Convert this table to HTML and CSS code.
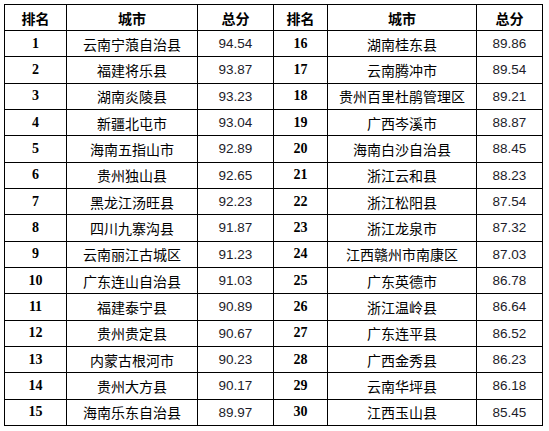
FILE: index.html
```html
<!DOCTYPE html>
<html lang="zh">
<head>
<meta charset="utf-8">
<link rel="stylesheet" href="styles.css">
</head>
<body>
<table class="rank-table">
<colgroup>
<col class="c-rank-l"><col class="c-city-l"><col class="c-score-l">
<col class="c-rank-r"><col class="c-city-r"><col class="c-score-r">
</colgroup>
<thead>
<tr class="head"><th>排名</th><th>城市</th><th>总分</th><th>排名</th><th>城市</th><th>总分</th></tr>
</thead>
<tbody>
<tr><td class="rank">1</td><td class="city">云南宁蒗自治县</td><td class="score">94.54</td><td class="rank">16</td><td class="city">湖南桂东县</td><td class="score">89.86</td></tr>
<tr><td class="rank">2</td><td class="city">福建将乐县</td><td class="score">93.87</td><td class="rank">17</td><td class="city">云南腾冲市</td><td class="score">89.54</td></tr>
<tr><td class="rank">3</td><td class="city">湖南炎陵县</td><td class="score">93.23</td><td class="rank">18</td><td class="city">贵州百里杜鹃管理区</td><td class="score">89.21</td></tr>
<tr><td class="rank">4</td><td class="city">新疆北屯市</td><td class="score">93.04</td><td class="rank">19</td><td class="city">广西岑溪市</td><td class="score">88.87</td></tr>
<tr><td class="rank">5</td><td class="city">海南五指山市</td><td class="score">92.89</td><td class="rank">20</td><td class="city">海南白沙自治县</td><td class="score">88.45</td></tr>
<tr><td class="rank">6</td><td class="city">贵州独山县</td><td class="score">92.65</td><td class="rank">21</td><td class="city">浙江云和县</td><td class="score">88.23</td></tr>
<tr><td class="rank">7</td><td class="city">黑龙江汤旺县</td><td class="score">92.23</td><td class="rank">22</td><td class="city">浙江松阳县</td><td class="score">87.54</td></tr>
<tr><td class="rank">8</td><td class="city">四川九寨沟县</td><td class="score">91.87</td><td class="rank">23</td><td class="city">浙江龙泉市</td><td class="score">87.32</td></tr>
<tr><td class="rank">9</td><td class="city">云南丽江古城区</td><td class="score">91.23</td><td class="rank">24</td><td class="city">江西赣州市南康区</td><td class="score">87.03</td></tr>
<tr><td class="rank">10</td><td class="city">广东连山自治县</td><td class="score">91.03</td><td class="rank">25</td><td class="city">广东英德市</td><td class="score">86.78</td></tr>
<tr><td class="rank">11</td><td class="city">福建泰宁县</td><td class="score">90.89</td><td class="rank">26</td><td class="city">浙江温岭县</td><td class="score">86.64</td></tr>
<tr><td class="rank">12</td><td class="city">贵州贵定县</td><td class="score">90.67</td><td class="rank">27</td><td class="city">广东连平县</td><td class="score">86.52</td></tr>
<tr><td class="rank">13</td><td class="city">内蒙古根河市</td><td class="score">90.23</td><td class="rank">28</td><td class="city">广西金秀县</td><td class="score">86.23</td></tr>
<tr><td class="rank">14</td><td class="city">贵州大方县</td><td class="score">90.17</td><td class="rank">29</td><td class="city">云南华坪县</td><td class="score">86.18</td></tr>
<tr><td class="rank">15</td><td class="city">海南乐东自治县</td><td class="score">89.97</td><td class="rank">30</td><td class="city">江西玉山县</td><td class="score">85.45</td></tr>
</tbody>
</table>
</body>
</html>
```
FILE: styles.css
```css
html, body {
  margin: 0;
  padding: 0;
  background: #ffffff;
}
body {
  padding: 4px 0 0 4px;
}
.rank-table {
  border-collapse: collapse;
  table-layout: fixed;
  width: 538px;
  color: #000;
}
.rank-table th,
.rank-table td {
  border: 1px solid #000;
  padding: 0;
  text-align: center;
  vertical-align: middle;
  line-height: 1;
  white-space: nowrap;
}
.c-rank-l { width: 62px; }
.c-city-l { width: 131px; }
.c-score-l { width: 76px; }
.c-rank-r { width: 54px; }
.c-city-r { width: 149px; }
.c-score-r { width: 66px; }
.head { height: 26px; }
tbody tr { height: 26.33px; }
.rank-table th {
  font-family: "Noto Sans CJK SC", sans-serif;
  font-weight: bold;
  font-size: 14px;
}
.rank {
  font-family: "Liberation Serif", serif;
  font-weight: bold;
  font-size: 14px;
}
.city {
  font-family: "Noto Sans CJK SC", sans-serif;
  font-size: 14px;
}
.score {
  font-family: "Liberation Sans", sans-serif;
  font-size: 13.5px;
  color: #1c1c2a;
}
```
